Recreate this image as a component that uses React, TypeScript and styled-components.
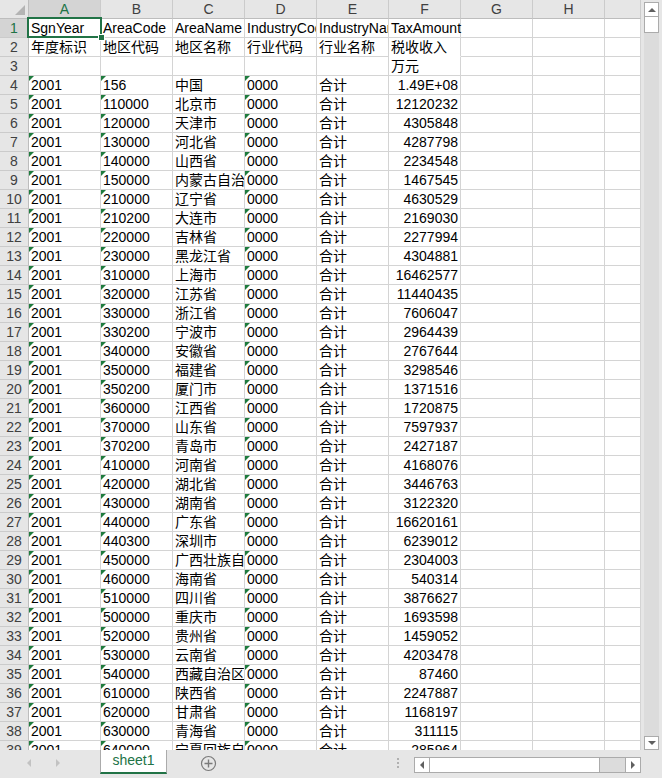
import React from 'react';
import styled, { createGlobalStyle, css } from 'styled-components';

const GlobalStyle = createGlobalStyle`
  html, body {
    margin: 0;
    padding: 0;
    overflow: hidden;
    background: #e6e6e6;
  }
`;

const GREEN = '#217346';
const GRID_LINE = '#d4d4d4';
const HEAD_LINE = '#bdbdbd';
const FONT = `"Liberation Sans", "Noto Sans CJK SC", Arial, sans-serif`;

const COLUMNS = ['A', 'B', 'C', 'D', 'E', 'F', 'G', 'H', ''];

const DATA: [string, string, string][] = [
  ['156', '中国', '1.49E+08'],
  ['110000', '北京市', '12120232'],
  ['120000', '天津市', '4305848'],
  ['130000', '河北省', '4287798'],
  ['140000', '山西省', '2234548'],
  ['150000', '内蒙古自治区', '1467545'],
  ['210000', '辽宁省', '4630529'],
  ['210200', '大连市', '2169030'],
  ['220000', '吉林省', '2277994'],
  ['230000', '黑龙江省', '4304881'],
  ['310000', '上海市', '16462577'],
  ['320000', '江苏省', '11440435'],
  ['330000', '浙江省', '7606047'],
  ['330200', '宁波市', '2964439'],
  ['340000', '安徽省', '2767644'],
  ['350000', '福建省', '3298546'],
  ['350200', '厦门市', '1371516'],
  ['360000', '江西省', '1720875'],
  ['370000', '山东省', '7597937'],
  ['370200', '青岛市', '2427187'],
  ['410000', '河南省', '4168076'],
  ['420000', '湖北省', '3446763'],
  ['430000', '湖南省', '3122320'],
  ['440000', '广东省', '16620161'],
  ['440300', '深圳市', '6239012'],
  ['450000', '广西壮族自治区', '2304003'],
  ['460000', '海南省', '540314'],
  ['510000', '四川省', '3876627'],
  ['500000', '重庆市', '1693598'],
  ['520000', '贵州省', '1459052'],
  ['530000', '云南省', '4203478'],
  ['540000', '西藏自治区', '87460'],
  ['610000', '陕西省', '2247887'],
  ['620000', '甘肃省', '1168197'],
  ['630000', '青海省', '311115'],
  ['640000', '宁夏回族自治区', '285964'],
];

const Window = styled.div`
  width: 662px;
  height: 778px;
  display: grid;
  grid-template-rows: 750px 28px;
  background: #e6e6e6;
  font-family: ${FONT};
  overflow: hidden;
`;

const Main = styled.div`
  display: flex;
  min-height: 0;
`;

const Viewport = styled.div`
  width: 641px;
  height: 750px;
  overflow: hidden;
  background: #e6e6e6;
`;

const Grid = styled.div`
  display: grid;
  grid-template-columns: 29px repeat(8, 72px) 36px;
  grid-auto-rows: 19px;
  width: 641px;
  background: #fff;
  border-right: 1px solid #a6a6a6;
  box-sizing: border-box;
`;

const Corner = styled.div`
  background: #e6e6e6;
  border-right: 1px solid ${HEAD_LINE};
  border-bottom: 1px solid ${HEAD_LINE};
  display: flex;
  align-items: flex-end;
  justify-content: flex-end;
  padding: 0 3px 3px 0;
  box-sizing: border-box;

  &::after {
    content: '';
    width: 0;
    height: 0;
    border-left: 10px solid transparent;
    border-bottom: 10px solid #b4b4b4;
  }
`;

const ColHead = styled.div<{ $active?: boolean }>`
  background: ${p => (p.$active ? '#d4d4d4' : '#e6e6e6')};
  color: ${p => (p.$active ? GREEN : '#404040')};
  border-right: 1px solid #cbcbcb;
  border-bottom: 1px solid ${HEAD_LINE};
  box-sizing: border-box;
  font-size: 14px;
  line-height: 18px;
  text-align: center;
`;

const RowHead = styled.div<{ $active?: boolean }>`
  background: ${p => (p.$active ? '#d4d4d4' : '#e6e6e6')};
  color: ${p => (p.$active ? GREEN : '#404040')};
  border-right: 1px solid ${HEAD_LINE};
  border-bottom: 1px solid #cbcbcb;
  box-sizing: border-box;
  font-size: 14px;
  line-height: 18px;
  text-align: center;
`;

const Cell = styled.div<{
  $right?: boolean;
  $flag?: boolean;
  $spill?: boolean;
  $open?: boolean;
}>`
  position: relative;
  box-sizing: border-box;
  border-right: 1px solid ${GRID_LINE};
  border-bottom: 1px solid ${p => (p.$open ? '#fff' : GRID_LINE)};
  padding: 0 2px 0 2px;
  font-size: 14px;
  line-height: 19px;
  color: #000;
  white-space: nowrap;
  overflow: ${p => (p.$spill ? 'visible' : 'hidden')};
  text-align: ${p => (p.$right ? 'right' : 'left')};
  ${p =>
    p.$spill &&
    css`
      z-index: 1;
    `}

  ${p =>
    p.$flag &&
    css`
      &::before {
        content: '';
        position: absolute;
        top: 0;
        left: 0;
        width: 0;
        height: 0;
        border-top: 5px solid #1e7b3d;
        border-right: 5px solid transparent;
      }
    `}
`;

const Selection = styled.div`
  position: absolute;
  top: -2px;
  left: -2px;
  right: -2px;
  bottom: -1px;
  border: 2px solid ${GREEN};
  pointer-events: none;
`;

const Handle = styled.div`
  position: absolute;
  right: -5px;
  bottom: -5px;
  width: 5px;
  height: 5px;
  background: ${GREEN};
  border: 1px solid #fff;
`;

/* vertical scrollbar */
const VScroll = styled.div`
  width: 21px;
  display: flex;
  flex-direction: column;
  padding: 2px 3px 0 3px;
  box-sizing: border-box;
`;

const ScrollBtn = styled.div<{ $h?: number }>`
  height: ${p => p.$h ?? 15}px;
  background: #fff;
  border: 1px solid #ababab;
  box-sizing: border-box;
  display: flex;
  align-items: center;
  justify-content: center;
  flex-shrink: 0;
`;

const VTrack = styled.div`
  flex: 1;
  background: #dcdcdc;
`;

const Arrow = styled.span<{ $dir: 'up' | 'down' | 'left' | 'right'; $color?: string }>`
  width: 0;
  height: 0;
  ${p => {
    const c = p.$color ?? '#606060';
    switch (p.$dir) {
      case 'up':
        return css`
          border-left: 4px solid transparent;
          border-right: 4px solid transparent;
          border-bottom: 4px solid ${c};
        `;
      case 'down':
        return css`
          border-left: 4px solid transparent;
          border-right: 4px solid transparent;
          border-top: 4px solid ${c};
        `;
      case 'left':
        return css`
          border-top: 4px solid transparent;
          border-bottom: 4px solid transparent;
          border-right: 4px solid ${c};
        `;
      default:
        return css`
          border-top: 4px solid transparent;
          border-bottom: 4px solid transparent;
          border-left: 4px solid ${c};
        `;
    }
  }}
`;

/* bottom tab bar */
const TabBar = styled.div`
  display: flex;
  align-items: flex-start;
  height: 28px;
  background: #e6e6e6;
`;

const NavArea = styled.div`
  width: 100px;
  height: 26px;
  display: flex;
  align-items: center;
  gap: 25px;
  padding-left: 27px;
  box-sizing: border-box;
`;

const SheetTab = styled.div`
  width: 67px;
  height: 24px;
  background: #fff;
  border-left: 1px solid #ababab;
  border-right: 1px solid #ababab;
  border-bottom: 2px solid ${GREEN};
  box-sizing: border-box;
  color: ${GREEN};
  font-size: 14px;
  line-height: 21px;
  text-align: center;
`;

const AddSheet = styled.div`
  margin-left: 33px;
  height: 26px;
  display: flex;
  align-items: center;
`;

const Spacer = styled.div`
  flex: 1;
`;

const Dots = styled.div`
  height: 26px;
  display: flex;
  flex-direction: column;
  justify-content: center;
  gap: 2px;
  margin-right: 15px;

  span {
    width: 2px;
    height: 2px;
    background: #b0b0b0;
  }
`;

const HScroll = styled.div`
  width: 227px;
  height: 16px;
  margin-top: 7px;
  margin-right: 21px;
  display: flex;
  border: 1px solid #ababab;
  box-sizing: border-box;
  background: #dcdcdc;
`;

const HBtn = styled.div`
  width: 14px;
  background: #fff;
  display: flex;
  align-items: center;
  justify-content: center;
  flex-shrink: 0;
`;

const HThumb = styled.div`
  width: 171px;
  background: #fff;
  border-left: 1px solid #ababab;
  border-right: 1px solid #ababab;
  box-sizing: border-box;
`;

const HTrack = styled.div`
  flex: 1;
  border-right: 1px solid #ababab;
`;

const PlusIcon = () => (
  <svg width="17" height="17" viewBox="0 0 17 17">
    <circle cx="8.5" cy="8.5" r="7" fill="none" stroke="#7a7a7a" strokeWidth="1.2" />
    <path d="M8.5 4.5v8M4.5 8.5h8" stroke="#7a7a7a" strokeWidth="1.4" />
  </svg>
);

type RowSpec = {
  cells: string[];
  flags?: boolean;
};

const header1 = ['SgnYear', 'AreaCode', 'AreaName', 'IndustryCode', 'IndustryName', 'TaxAmount', '', '', ''];
const header2 = ['年度标识', '地区代码', '地区名称', '行业代码', '行业名称', '税收收入', '', '', ''];
const header3 = ['', '', '', '', '', '万元', '', '', ''];

const rows: RowSpec[] = [
  { cells: header1 },
  { cells: header2 },
  { cells: header3 },
  ...DATA.map(([code, name, amount]) => ({
    cells: ['2001', code, name, '0000', '合计', amount, '', '', ''],
    flags: true,
  })),
];

const App: React.FC = () => {
  return (
    <>
      <GlobalStyle />
      <Window>
        <Main>
          <Viewport>
            <Grid>
              <Corner />
              {COLUMNS.map((c, i) => (
                <ColHead key={i} $active={c === 'A'}>
                  {c}
                </ColHead>
              ))}
              {rows.map((row, r) => (
                <React.Fragment key={r}>
                  <RowHead $active={r === 0}>{r + 1}</RowHead>
                  {row.cells.map((text, c) => {
                    const isData = !!row.flags;
                    return (
                      <Cell
                        key={c}
                        $right={isData && c === 5}
                        $flag={isData && (c === 0 || c === 1 || c === 3)}
                        $spill={(r === 0 && (c === 0 || c === 5))}
                        $open={r === 1 && c === 5}
                      >
                        {text}
                        {r === 0 && c === 0 && (
                          <Selection>
                            <Handle />
                          </Selection>
                        )}
                      </Cell>
                    );
                  })}
                </React.Fragment>
              ))}
            </Grid>
          </Viewport>
          <VScroll>
            <ScrollBtn>
              <Arrow $dir="up" />
            </ScrollBtn>
            <ScrollBtn $h={16} style={{ borderTop: 'none' }} />
            <VTrack />
            <ScrollBtn $h={14}>
              <Arrow $dir="down" />
            </ScrollBtn>
          </VScroll>
        </Main>
        <TabBar>
          <NavArea>
            <Arrow $dir="left" $color="#c2c2c2" />
            <Arrow $dir="right" $color="#c2c2c2" />
          </NavArea>
          <SheetTab>sheet1</SheetTab>
          <AddSheet>
            <PlusIcon />
          </AddSheet>
          <Spacer />
          <Dots>
            <span />
            <span />
            <span />
          </Dots>
          <HScroll>
            <HBtn>
              <Arrow $dir="left" />
            </HBtn>
            <HThumb />
            <HTrack />
            <HBtn>
              <Arrow $dir="right" />
            </HBtn>
          </HScroll>
        </TabBar>
      </Window>
    </>
  );
};

export default App;
